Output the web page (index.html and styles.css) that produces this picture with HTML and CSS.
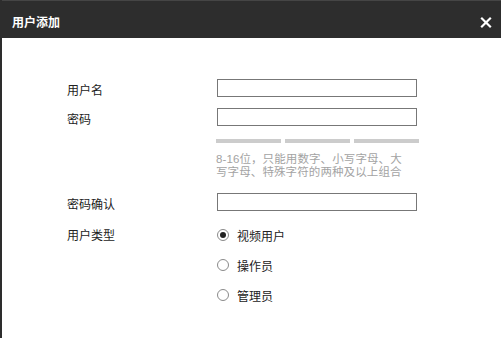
FILE: index.html
```html
<!DOCTYPE html>
<html lang="zh">
<head>
<meta charset="utf-8">
<link rel="stylesheet" href="styles.css">
</head>
<body>
<div class="dialog">
  <div class="header">
    <span class="title">用户添加</span>
    <svg class="close" width="12" height="11" viewBox="0 0 12 11"><path d="M1.2 0.8 L10.8 10.2 M10.8 0.8 L1.2 10.2" stroke="#fff" stroke-width="2.2" stroke-linecap="butt"/></svg>
  </div>
  <div class="body">
    <div class="row r1">
      <span class="label">用户名</span>
      <span class="input"></span>
    </div>
    <div class="row r2">
      <span class="label">密码</span>
      <span class="input"></span>
    </div>
    <div class="bars"><span></span><span></span><span></span></div>
    <div class="hint">
      <div class="hline">8-16位，只能用数字、小写字母、大</div>
      <div class="hline">写字母、特殊字符的两种及以上组合</div>
    </div>
    <div class="row r3">
      <span class="label">密码确认</span>
      <span class="input"></span>
    </div>
    <div class="radios">
      <span class="label rlabel">用户类型</span>
      <div class="options">
        <div class="opt"><span class="radio checked"></span><span>视频用户</span></div>
        <div class="opt"><span class="radio"></span><span>操作员</span></div>
        <div class="opt"><span class="radio"></span><span>管理员</span></div>
      </div>
    </div>
  </div>
</div>
</body>
</html>
```
FILE: styles.css
```css
html, body {
  margin: 0;
  padding: 0;
  background: #fff;
}
body {
  font-family: "Noto Sans CJK SC", "Microsoft YaHei", sans-serif;
  font-size: 12px;
  color: #222;
}
.dialog {
  width: 501px;
  height: 338px;
  box-sizing: border-box;
  border-left: 2px solid #2d2d2d;
}
.header {
  height: 38px;
  box-sizing: border-box;
  border-top: 1px solid #454545;
  background: #2d2d2d;
  display: flex;
  align-items: center;
  justify-content: space-between;
  padding: 0 9px 0 10px;
}
.title {
  color: #fff;
  font-weight: bold;
  font-size: 12px;
  line-height: 14px;
  margin-top: 5px;
}
.close {
  display: block;
  margin-top: 5px;
}
.body {
  padding: 41px 0 0 65px;
}
.row {
  display: flex;
  align-items: center;
  height: 18px;
}
.label {
  width: 150px;
  line-height: 18px;
  padding-top: 3px;
}
.input {
  width: 200px;
  height: 18px;
  box-sizing: border-box;
  border: 1px solid #777;
}
.r2 {
  margin-top: 11px;
}
.bars {
  display: flex;
  gap: 4px;
  margin: 13px 0 0 149px;
}
.bars span {
  width: 65px;
  height: 4px;
  background: #cccccc;
}
.hint {
  margin: 10px 0 0 149px;
  color: #a3a3a3;
  font-family: "Liberation Sans", "Noto Sans CJK SC", sans-serif;
  font-size: 11.5px;
  width: 210px;
  letter-spacing: 0.1px;
}
.hline {
  height: 13px;
  line-height: 13px;
  white-space: nowrap;
}
.r3 {
  margin-top: 14px;
}
.radios {
  display: flex;
  margin-top: 9px;
}
.rlabel {
  height: 30px;
  line-height: 30px;
  padding-top: 0;
}
.options {
  display: flex;
  flex-direction: column;
}
.opt {
  height: 30px;
  display: flex;
  align-items: center;
  gap: 8px;
}
.radio {
  width: 12px;
  height: 12px;
  box-sizing: border-box;
  border: 1px solid #8a8a8a;
  border-radius: 50%;
  display: flex;
  align-items: center;
  justify-content: center;
}
.radio.checked::after {
  content: "";
  width: 6px;
  height: 6px;
  border-radius: 50%;
  background: #222;
}
```
